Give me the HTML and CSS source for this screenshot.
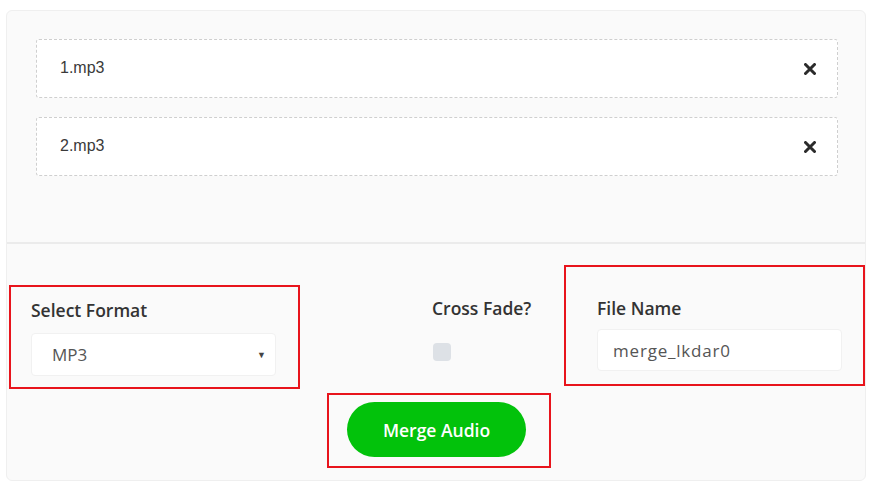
FILE: index.html
```html
<!DOCTYPE html>
<html lang="en">
<head>
  <meta charset="UTF-8" />
  <title>Merge Audio</title>
  <link rel="stylesheet" href="styles.css">
</head>
<body>
  <div class="card">
    <div class="files">
      <div class="file">
        <span>1.mp3</span>
        <button class="remove" title="Remove">
          <svg width="12" height="12" viewBox="0 0 12 12"><path d="M1.5 1.5 L10.5 10.5 M10.5 1.5 L1.5 10.5" stroke="#2b2b2b" stroke-width="3" stroke-linecap="round"/></svg>
        </button>
      </div>
      <div class="file">
        <span>2.mp3</span>
        <button class="remove" title="Remove">
          <svg width="12" height="12" viewBox="0 0 12 12"><path d="M1.5 1.5 L10.5 10.5 M10.5 1.5 L1.5 10.5" stroke="#2b2b2b" stroke-width="3" stroke-linecap="round"/></svg>
        </button>
      </div>
    </div>

    <div class="options">
      <div class="group format marked">
        <label for="format">Select Format</label>
        <div class="select">
          <span>MP3</span>
          <span class="arrow">&#9660;</span>
        </div>
      </div>
      <div class="group fade">
        <label>Cross Fade?</label>
        <span class="check"></span>
      </div>
      <div class="group filename marked">
        <label for="name">File Name</label>
        <div class="input">merge_lkdar0</div>
      </div>
    </div>

    <div class="actions">
      <div class="marked action-box">
        <button class="merge">Merge Audio</button>
      </div>
    </div>
  </div>
</body>
</html>
```

FILE: styles.css
```css
body {
  margin: 0;
  background: #fff;
  font-family: 'Open Sans', sans-serif;
  color: #333;
}

.card {
  width: 858px;
  margin: 10px 0 0 6px;
  background: #fafafa;
  border: 1px solid #efefef;
  border-radius: 6px;
  padding-bottom: 12px;
}

.files {
  padding: 28px 27px 0 29px;
  height: 203px;
  border-bottom: 2px solid #ebebeb;
  display: flex;
  flex-direction: column;
  gap: 19px;
}

.file {
  height: 57px;
  background: #fff;
  border: 1px dashed #cfcfcf;
  border-radius: 3px;
  display: flex;
  align-items: center;
  justify-content: space-between;
  padding: 0 21px 0 23px;
  font-family: 'Liberation Sans', Arial, sans-serif;
  font-size: 16px;
  color: #3a3a3a;
}

.file span {
  margin-top: -1px;
}

.remove {
  border: none;
  background: none;
  padding: 0;
  display: flex;
}

.options {
  display: flex;
  align-items: flex-start;
}

.marked {
  border: 2px solid #e8141c;
}

.group label {
  display: block;
  font-weight: 600;
  font-size: 17.5px;
  line-height: 22px;
  color: #333;
}

.format {
  width: 245px;
  height: 88px;
  margin: 41px 0 0 2px;
  padding: 12px 22px 0 20px;
}

.select {
  margin-top: 12px;
  height: 43px;
  background: #fff;
  border: 1px solid #f1f1f1;
  border-radius: 4px;
  box-sizing: border-box;
  display: flex;
  align-items: center;
  justify-content: space-between;
  padding: 0 9px 0 20px;
  font-size: 17px;
  color: #555;
}

.arrow {
  font-size: 9px;
  color: #444;
}

.fade {
  margin: 53px 0 0 132px;
  width: 103px;
}

.check {
  display: block;
  width: 18px;
  height: 18px;
  margin: 24px 0 0 1px;
  background: #dde1e6;
  border-radius: 4px;
}

.filename {
  width: 245px;
  height: 87px;
  margin: 21px 0 0 29px;
  padding: 30px 21px 0 31px;
}

.input {
  margin-top: 10px;
  height: 42px;
  box-sizing: border-box;
  background: #fff;
  border: 1px solid #f1f1f1;
  border-radius: 4px;
  display: flex;
  align-items: center;
  padding: 0 15px;
  font-size: 17px;
  letter-spacing: 0.8px;
  color: #555;
}

.actions {
  display: flex;
  justify-content: center;
  margin-top: 4px;
}

.action-box {
  width: 202px;
  height: 64px;
  padding: 7px 0 0 18px;
  margin-left: 6px;
}

.merge {
  width: 179px;
  height: 55px;
  border: none;
  border-radius: 28px;
  background: #02c20b;
  color: #fff;
  font-family: 'Open Sans', sans-serif;
  font-weight: 600;
  font-size: 17.5px;
  cursor: pointer;
}
```
